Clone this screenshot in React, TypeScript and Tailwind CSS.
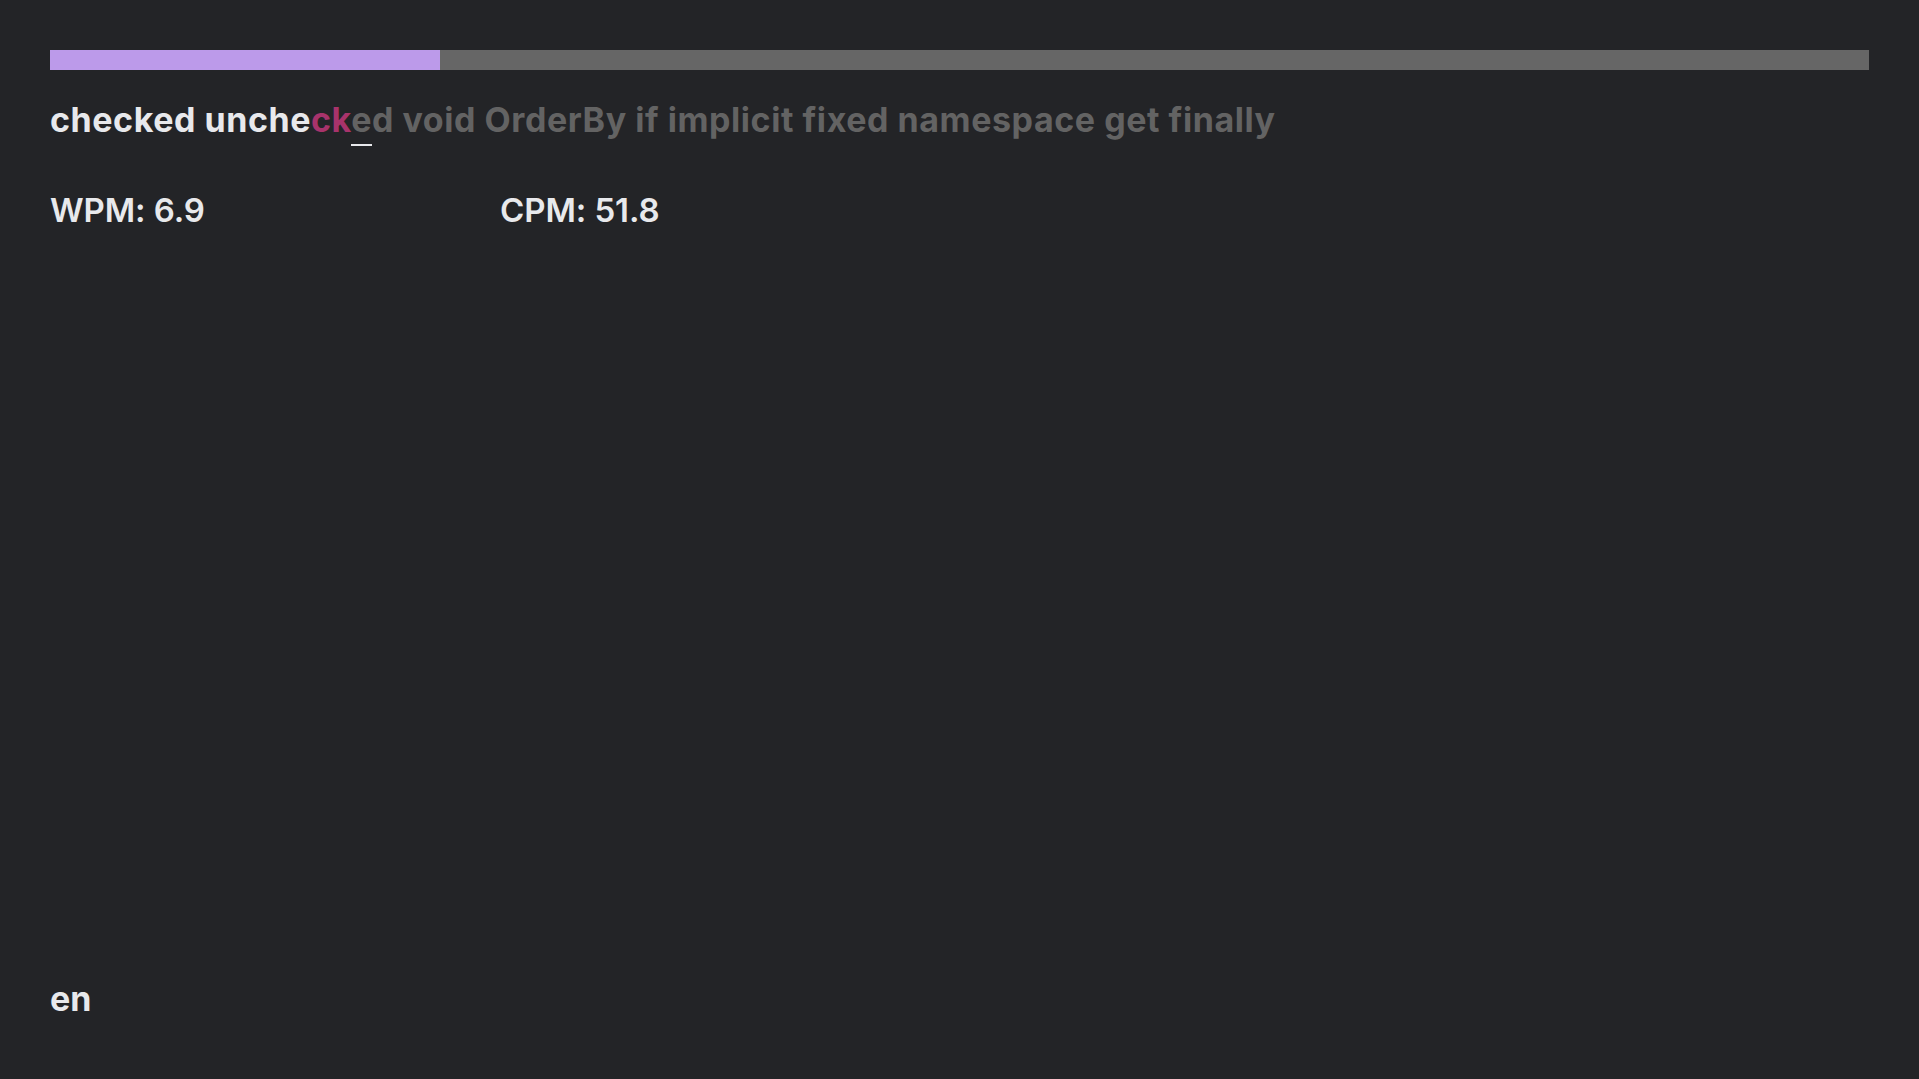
import React from "react";

const typed = "checked unche";
const wrong = "ck";
const current = "e";
const rest = "d void OrderBy if implicit fixed namespace get finally";

const Stat = ({ label, value }: { label: string; value: string }) => (
  <div className="w-[450px] text-[33px] font-semibold text-[#e8e9ec] leading-none tracking-[-0.1px]">
    {label}: {value}
  </div>
);

const App = () => {
  return (
    <div
      className="w-full h-[1079px] bg-[#232427] flex flex-col px-[50px] pt-[50px] pb-[50px]"
      style={{ fontFamily: "Inter, 'Open Sans', sans-serif" }}
    >
      <div className="w-full h-[20px] bg-[#666666] flex">
        <div className="h-full bg-[#bc9aea]" style={{ width: "21.43%" }} />
      </div>

      <div className="mt-[28px] text-[34px] font-bold leading-[44px] whitespace-pre tracking-[0.55px]">
        <span className="text-[#e8e9ec]">{typed}</span>
        <span className="text-[#a8336b]">{wrong}</span>
        <span className="relative text-[#636363]">
          {current}
          <span className="absolute left-0 right-0 bottom-[-6px] h-[2px] bg-[#e8e9ec]" />
        </span>
        <span className="text-[#636363]">{rest}</span>
      </div>

      <div className="mt-[52px] flex">
        <Stat label="WPM" value="6.9" />
        <Stat label="CPM" value="51.8" />
      </div>

      <div className="flex-1" />

      <div className="text-[34px] font-bold text-[#e8e9ec] leading-none mb-[13px]">en</div>
    </div>
  );
};

export default App;
